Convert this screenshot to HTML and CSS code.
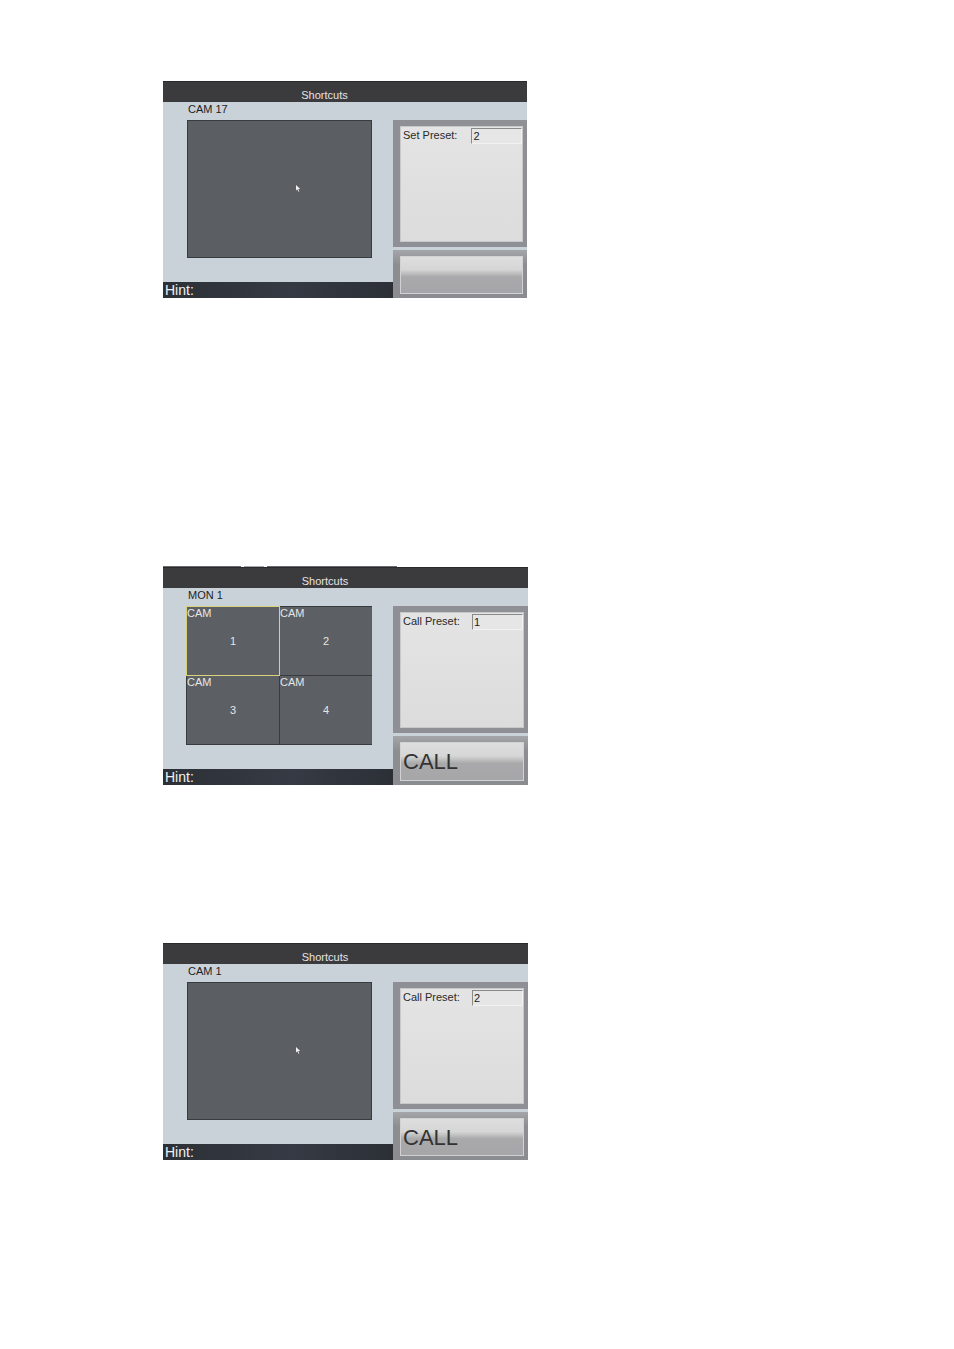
FILE: index.html
```html
<!DOCTYPE html>
<html>
<head>
<meta charset="utf-8">
<link rel="stylesheet" href="styles.css">
</head>
<body>
<div class="page">

  <div class="panel p1">
    <div class="title">Shortcuts</div>
    <div class="content">
      <div class="left">
        <div class="label">CAM 17</div>
        <div class="video">
          <svg class="cursor" width="5" height="7" viewBox="0 0 5 7"><path d="M0 0 L0 5.5 L1.4 4.3 L2.5 6.8 L3.3 6.4 L2.3 4 L4.2 4 Z" fill="#f2f2f2"/></svg>
        </div>
        <div class="hint">Hint:</div>
      </div>
      <div class="right">
        <div class="frame preset">
          <div class="inner">
            <div class="row"><span class="plabel">Set Preset:</span><span class="field">2</span></div>
          </div>
        </div>
        <div class="frame btnframe">
          <div class="btn"></div>
        </div>
      </div>
    </div>
  </div>

  <div class="panel p2">
    <div class="tabs"><span class="t1"></span><span class="t2"></span><span class="t3"></span></div>
    <div class="title">Shortcuts</div>
    <div class="content">
      <div class="left">
        <div class="label">MON 1</div>
        <div class="quad">
          <div class="cell sel"><span class="cam">CAM</span><span class="num">1</span></div>
          <div class="cell"><span class="cam">CAM</span><span class="num">2</span></div>
          <div class="cell"><span class="cam">CAM</span><span class="num">3</span></div>
          <div class="cell"><span class="cam">CAM</span><span class="num">4</span></div>
        </div>
        <div class="hint">Hint:</div>
      </div>
      <div class="right">
        <div class="frame preset">
          <div class="inner">
            <div class="row"><span class="plabel">Call Preset:</span><span class="field">1</span></div>
          </div>
        </div>
        <div class="frame btnframe">
          <div class="btn">CALL</div>
        </div>
      </div>
    </div>
  </div>

  <div class="panel p3">
    <div class="title">Shortcuts</div>
    <div class="content">
      <div class="left">
        <div class="label">CAM 1</div>
        <div class="video">
          <svg class="cursor" width="5" height="7" viewBox="0 0 5 7"><path d="M0 0 L0 5.5 L1.4 4.3 L2.5 6.8 L3.3 6.4 L2.3 4 L4.2 4 Z" fill="#f2f2f2"/></svg>
        </div>
        <div class="hint">Hint:</div>
      </div>
      <div class="right">
        <div class="frame preset">
          <div class="inner">
            <div class="row"><span class="plabel">Call Preset:</span><span class="field">2</span></div>
          </div>
        </div>
        <div class="frame btnframe">
          <div class="btn">CALL</div>
        </div>
      </div>
    </div>
  </div>

</div>
</body>
</html>
```

FILE: styles.css
```css
html, body {
  margin: 0;
  padding: 0;
  background: #ffffff;
}
body {
  font-family: "Liberation Sans", Arial, sans-serif;
}
.page {
  display: flex;
  flex-direction: column;
  padding-top: 81px;
  padding-left: 163px;
}
.panel {
  position: relative;
  width: 364px;
  height: 217px;
  background: #c9d1d9;
  display: flex;
  flex-direction: column;
}
.p2 {
  margin-top: 269px;
  width: 365px;
  height: 218px;
}
.p3 {
  margin-top: 158px;
  width: 365px;
}
.tabs {
  position: absolute;
  top: -2px;
  left: 0;
  height: 2px;
  width: 240px;
}
.tabs span {
  position: absolute;
  top: 1px;
  height: 1px;
  background: #6a6c70;
}
.tabs .t1 { left: 0; width: 78px; }
.tabs .t2 { left: 81px; width: 20px; background: #a8aaae; }
.tabs .t3 { left: 104px; width: 130px; }
.title {
  height: 21px;
  flex: none;
  background: #3b3b3d;
  color: #e4e4e4;
  font-size: 11px;
  line-height: 26px;
  text-align: center;
  padding-right: 41px;
  box-sizing: border-box;
  border-top: 1px solid #2a2a2c;
}
.content {
  flex: 1;
  display: flex;
  min-height: 0;
}
.left {
  width: 230px;
  flex: none;
  display: flex;
  flex-direction: column;
}
.label {
  height: 18px;
  padding-left: 25px;
  font-size: 11px;
  line-height: 15px;
  color: #1e1e1e;
}
.video {
  position: relative;
  margin-left: 24px;
  width: 185px;
  height: 138px;
  box-sizing: border-box;
  background: #5b5e63;
  border: 1px solid #393b3f;
}
.cursor {
  position: absolute;
  left: 108px;
  top: 64px;
}
.quad {
  margin-left: 23px;
  width: 186px;
  height: 139px;
  box-sizing: border-box;
  border: 1px solid #393b3f;
  background: #393b3f;
  display: grid;
  grid-template-columns: 92px 92px;
  grid-template-rows: 68px 68px;
  column-gap: 1px;
  row-gap: 1px;
}
.cell {
  position: relative;
  background: #5c5f64;
  display: flex;
  align-items: center;
  justify-content: center;
}
.cell.sel {
  outline: 1px solid #d9d27a;
  outline-offset: 0;
  z-index: 1;
}
.cam {
  position: absolute;
  left: 0;
  top: 0;
  font-size: 11px;
  line-height: 12px;
  color: #e6e6e6;
}
.num {
  font-size: 11px;
  color: #e6e6e6;
}
.hint {
  margin-top: auto;
  height: 16px;
  background: linear-gradient(90deg, #2c3036 0%, #353a44 55%, #2c3036 100%);
  color: #f0f0f0;
  font-size: 14px;
  line-height: 17px;
  padding-left: 2px;
}
.right {
  width: 134px;
  flex: none;
  display: flex;
  flex-direction: column;
  padding-top: 18px;
  box-sizing: border-box;
}
.p2 .right, .p3 .right { width: 135px; }
.frame {
  background: #8e9095;
  box-sizing: border-box;
}
.preset {
  height: 127px;
  padding: 6px 4px 5px 7px;
}
.inner {
  height: 100%;
  background: linear-gradient(180deg, #e4e4e4 0%, #dcdcdc 100%);
  box-sizing: border-box;
  border: 1px solid #c8c8ca;
}
.row {
  display: flex;
  align-items: flex-start;
  padding-top: 1px;
}
.plabel {
  width: 69px;
  padding-left: 2px;
  font-size: 11px;
  line-height: 15px;
  color: #2a2a2a;
}
.field {
  width: 51px;
  height: 16px;
  box-sizing: border-box;
  border-top: 1px solid #8a8a8a;
  border-left: 1px solid #8a8a8a;
  border-bottom: 1px solid #f2f2f2;
  border-right: 1px solid #f2f2f2;
  background: #e6e6e6;
  font-size: 11px;
  line-height: 14px;
  color: #222;
  padding-left: 1px;
}
.btnframe {
  margin-top: 3px;
  flex: 1;
  padding: 6px 4px 4px 7px;
  background: linear-gradient(180deg, #a3a5a9 0%, #8c8e92 30%, #8a8c90 100%);
}
.btn {
  height: 100%;
  box-sizing: border-box;
  border: 1px solid #d2d2d4;
  background: linear-gradient(180deg, #dedede 0%, #d6d6d6 35%, #c0c0c0 45%, #a9a9ab 55%, #a6a6a8 100%);
  font-size: 22px;
  line-height: 24px;
  color: #333333;
  padding-left: 2px;
  padding-top: 7px;
  overflow: hidden;
}
```
